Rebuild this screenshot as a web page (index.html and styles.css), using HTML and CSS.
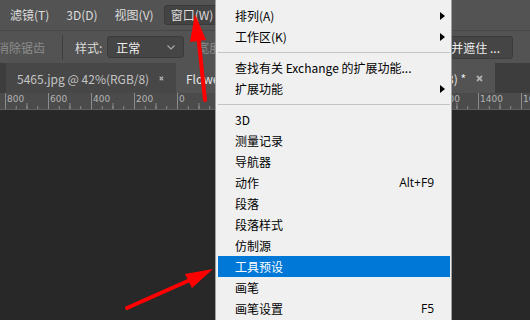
FILE: index.html
```html
<!DOCTYPE html>
<html lang="zh-CN">

<head>
    <meta charset="UTF-8">
    <title>Photoshop - 窗口菜单</title>
    <link rel="stylesheet" href="styles.css">
</head>

<body>
    <div class="app">
        <!-- Top menu bar -->
        <div class="menubar">
            <span class="menu-item">滤镜(T)</span>
            <span class="menu-item">3D(D)</span>
            <span class="menu-item">视图(V)</span>
            <span class="menu-item open">窗口(W)</span>
        </div>

        <!-- Tool options bar -->
        <div class="optionsbar">
            <span class="opt-label dim first">消除锯齿</span>
            <span class="opt-sep"></span>
            <span class="opt-label">样式:</span>
            <div class="select">
                <span>正常</span>
                <svg class="chevron" width="8" height="5" viewBox="0 0 8 5">
                    <path d="M0.5 0.5 L4 4 L7.5 0.5" fill="none" stroke="#a8a8a8" stroke-width="1.2" />
                </svg>
            </div>
            <span class="opt-label dim">宽度:</span>
            <div class="spacer"></div>
            <div class="opt-button">选择并遮住 ...</div>
        </div>

        <!-- Document tabs -->
        <div class="tabbar">
            <div class="tab">
                <span class="tab-title">5465.jpg @ 42%(RGB/8)</span>
                <svg class="tab-close" width="7" height="7" viewBox="0 0 7 7">
                    <path d="M1 1 L6 6 M6 1 L1 6" stroke="#b0b0b0" stroke-width="1.8" />
                </svg>
            </div>
            <div class="tab active">
                <span class="tab-title">Flower.jpg @ 66.7% (图层 1,</span>
                <span class="tab-title tail">RGB/8) *</span>
                <svg class="tab-close" width="7" height="7" viewBox="0 0 7 7">
                    <path d="M1 1 L6 6 M6 1 L1 6" stroke="#b0b0b0" stroke-width="1.8" />
                </svg>
            </div>
        </div>

        <!-- Horizontal ruler -->
        <div class="ruler">
            <span>800</span><span>600</span><span>400</span><span>200</span><span>0</span>
            <span>200</span><span>400</span><span>600</span><span>800</span><span>1000</span>
            <span>1200</span><span>1400</span><span>1600</span>
        </div>

        <div class="workspace"></div>

        <!-- Window menu dropdown -->
        <div class="dropdown">
            <div class="dd-item"><span class="dd-label">排列(A)</span><span class="dd-arrow"></span></div>
            <div class="dd-item"><span class="dd-label">工作区(K)</span><span class="dd-arrow"></span></div>
            <div class="dd-sep"></div>
            <div class="dd-item"><span class="dd-label">查找有关 Exchange 的扩展功能...</span><span class="dd-end"></span></div>
            <div class="dd-item"><span class="dd-label">扩展功能</span><span class="dd-arrow"></span></div>
            <div class="dd-sep"></div>
            <div class="dd-item"><span class="dd-label">3D</span><span class="dd-end"></span></div>
            <div class="dd-item"><span class="dd-label">测量记录</span><span class="dd-end"></span></div>
            <div class="dd-item"><span class="dd-label">导航器</span><span class="dd-end"></span></div>
            <div class="dd-item"><span class="dd-label">动作</span><span class="dd-key">Alt+F9</span><span class="dd-end"></span></div>
            <div class="dd-item"><span class="dd-label">段落</span><span class="dd-end"></span></div>
            <div class="dd-item"><span class="dd-label">段落样式</span><span class="dd-end"></span></div>
            <div class="dd-item"><span class="dd-label">仿制源</span><span class="dd-end"></span></div>
            <div class="dd-item selected"><span class="dd-label">工具预设</span><span class="dd-end"></span></div>
            <div class="dd-item"><span class="dd-label">画笔</span><span class="dd-end"></span></div>
            <div class="dd-item"><span class="dd-label">画笔设置</span><span class="dd-key">F5</span><span class="dd-end"></span></div>
        </div>

        <!-- Red annotation arrows -->
        <svg class="arrows" width="530" height="320" viewBox="0 0 530 320">
            <line x1="205" y1="100" x2="198.5" y2="38" stroke="#f00" stroke-width="4" stroke-linecap="round" />
            <polygon points="195,14 206,40 190,42" fill="#f00" />
            <line x1="127" y1="308" x2="190" y2="280" stroke="#f00" stroke-width="4" stroke-linecap="round" />
            <polygon points="213,269 192,288 185,274" fill="#f00" />
        </svg>
    </div>
</body>

</html>
```

FILE: styles.css
```css
body {
    margin: 0;
    padding: 0;
    background-color: #282828;
    font-family: "Noto Sans CJK SC", "Noto Sans", sans-serif;
    overflow: hidden;
}

.app {
    position: relative;
    width: 530px;
    height: 320px;
    overflow: hidden;
    display: flex;
    flex-direction: column;
}

/* Menu bar */
.menubar {
    height: 30px;
    background-color: #535353;
    display: flex;
    align-items: center;
    gap: 3px;
    padding-left: 3px;
    font-size: 12px;
    color: #dcdcdc;
}

.menu-item {
    padding: 0 6px;
    line-height: 18px;
    border: 1px solid transparent;
    border-radius: 3px;
}

.menu-item.open {
    background-color: #434343;
    border-color: #3a3a3a;
}

/* Options bar */
.optionsbar {
    height: 33px;
    background-color: #535353;
    border-top: 1px solid #474747;
    box-sizing: border-box;
    display: flex;
    align-items: center;
    font-size: 12px;
    color: #dcdcdc;
}

.opt-label.first {
    margin-left: -3px;
}

.opt-label.dim {
    color: #8c8c8c;
}

.opt-sep {
    width: 1px;
    height: 25px;
    background-color: #3e3e3e;
    margin: 0 12px 0 17px;
}

.select {
    width: 77px;
    height: 22px;
    box-sizing: border-box;
    margin: 0 13px 0 5px;
    padding: 0 8px 0 8px;
    background-color: #454545;
    border: 1px solid #3b3b3b;
    border-radius: 3px;
    display: flex;
    align-items: center;
    justify-content: space-between;
    color: #efefef;
}

.spacer {
    flex: 1;
}

.opt-button {
    height: 23px;
    box-sizing: border-box;
    margin-right: 17px;
    padding: 0 12px 0 8px;
    background-color: #454545;
    border: 1px solid #3b3b3b;
    border-radius: 3px;
    display: flex;
    align-items: center;
    color: #efefef;
}

/* Document tabs */
.tabbar {
    height: 30px;
    background-color: #3d3d3d;
    display: flex;
    padding-left: 6px;
    font-size: 12px;
    color: #c4c4c4;
}

.tab {
    display: flex;
    align-items: center;
    background-color: #474747;
    padding: 0 12px 0 11px;
    width: 170px;
    box-sizing: border-box;
}

.tab.active {
    background-color: #535353;
    width: 319px;
    padding-left: 10px;
    color: #e6e6e6;
}

.tab-title {
    white-space: nowrap;
    flex: 1;
}

.tab-title.tail {
    flex: none;
}

.tab-close {
    margin-left: 10px;
}

/* Ruler */
.ruler {
    height: 17px;
    box-sizing: border-box;
    background-color: #4b4b4b;
    border-bottom: 1px solid #5f5f5f;
    padding-left: 5px;
    display: flex;
    font-family: "DejaVu Sans", sans-serif;
    font-size: 9px;
    line-height: 13px;
    color: #b4b4b4;
    background-image:
        linear-gradient(to right, #8c8c8c 1px, transparent 1px),
        linear-gradient(to right, #8c8c8c 1px, transparent 1px),
        linear-gradient(to right, #8c8c8c 1px, transparent 1px);
    background-size: 43px 100%, 21.5px 6px, 10.75px 3px;
    background-position: 5px 0, 5px 100%, 5px 100%;
    background-repeat: repeat-x;
}

.ruler span {
    flex: none;
    width: 43px;
    padding-left: 2px;
    box-sizing: border-box;
}

.workspace {
    flex: 1;
    background-color: #282828;
}

/* Window dropdown menu */
.dropdown {
    position: absolute;
    top: 0;
    left: 215px;
    width: 237px;
    height: 340px;
    box-sizing: border-box;
    padding: 5px 1px 0 2px;
    background-color: #f0f0f0;
    border-left: 1px solid #a0a0a0;
    border-right: 1px solid #a0a0a0;
    font-size: 12px;
    color: #000;
}

.dd-item {
    height: 21px;
    line-height: 21px;
    display: flex;
    align-items: center;
    padding-left: 17px;
}

.dd-item.selected {
    background-color: #0078d7;
    color: #fff;
}

.dd-label {
    flex: 1;
    white-space: nowrap;
}

.dd-key {
    font-family: "Open Sans", sans-serif;
}

.dd-end,
.dd-arrow {
    width: 16px;
    height: 21px;
    flex: none;
}

.dd-arrow {
    display: flex;
    align-items: center;
    justify-content: center;
}

.dd-arrow::after {
    content: "";
    border-left: 5px solid #000;
    border-top: 4px solid transparent;
    border-bottom: 4px solid transparent;
}

.dd-sep {
    height: 10px;
    display: flex;
    align-items: center;
}

.dd-sep::after {
    content: "";
    flex: 1;
    height: 1px;
    margin-top: 1px;
    background-color: #c3c3c3;
}

/* Annotation overlay */
.arrows {
    position: absolute;
    top: 0;
    left: 0;
    pointer-events: none;
}
```
